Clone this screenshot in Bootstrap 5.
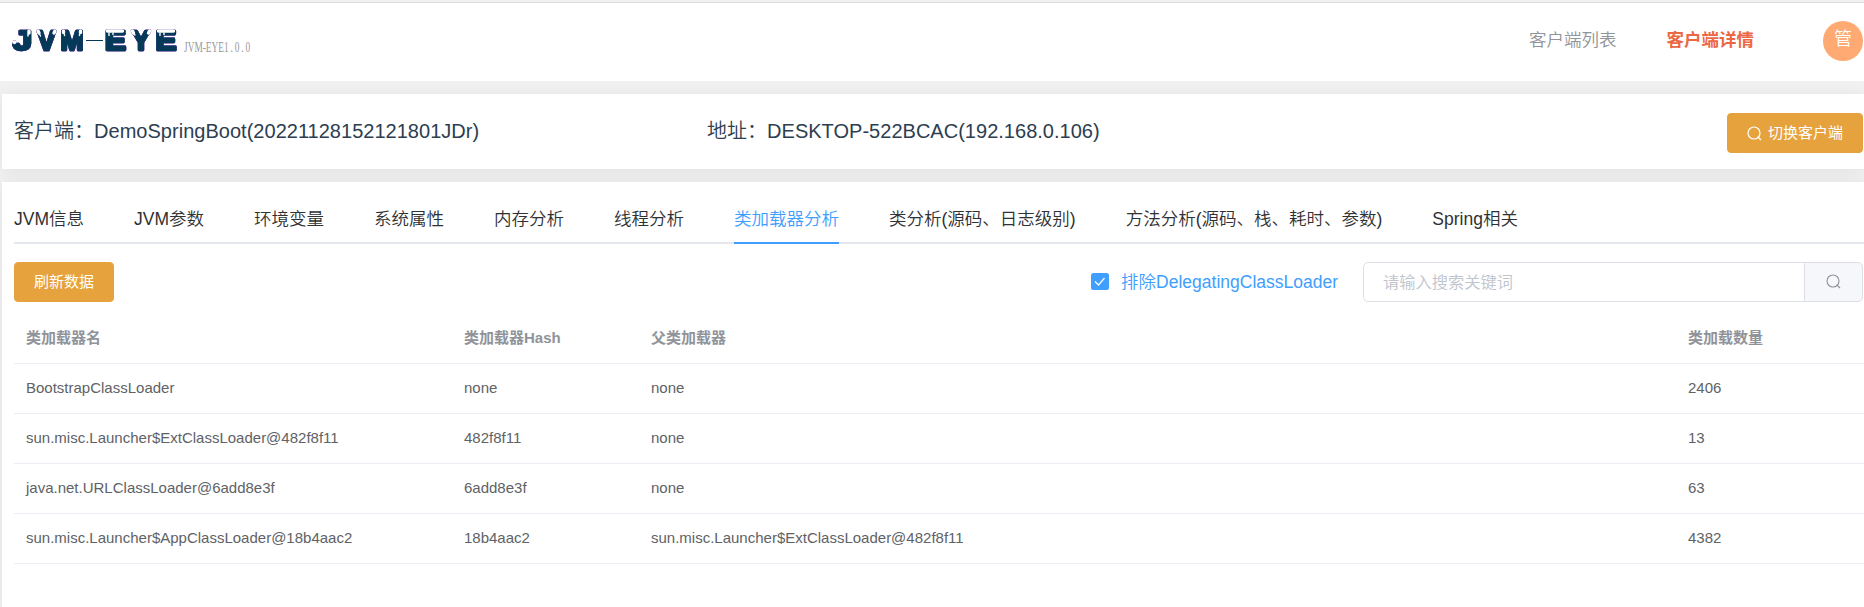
<!DOCTYPE html>
<html lang="zh-CN">
<head>
<meta charset="utf-8">
<title>JVM-EYE</title>
<link href="https://cdn.jsdelivr.net/npm/bootstrap@5.3.0/dist/css/bootstrap.min.css" rel="stylesheet">
<style>
body{font-family:"Liberation Sans","Noto Sans CJK SC",sans-serif;font-weight:350;background:#f1f1f1;color:#2c3e50;height:607px;overflow:hidden;font-size:17.5px}
.topbar{border-top:1px solid #dcdcdc;margin-top:2px;height:79px;background:#fff}
.topbar svg{overflow:visible}
.wordmark{filter:drop-shadow(0 0 .7px #8d4fc4) drop-shadow(0 0 .3px #8d4fc4)}
.nav-item-top{line-height:26px;padding-top:24px;color:#909399;margin-right:50px;white-space:nowrap;transform:translateX(-1px)}
.nav-item-top.active{color:#eb6844;font-weight:700}
.avatar{width:40px;height:40px;background:#ffa973;color:#fff;line-height:37px;font-size:18px;margin:18px 1px 0 18px}
.panel{margin-left:2px;background:#fff;box-shadow:0 2px 15px rgba(0,0,0,.07)}
.client-info{height:75px;margin-top:13px;font-size:20px}
.client-info>div{line-height:30px;padding-top:22px;white-space:nowrap;letter-spacing:.02px}
.col-client{width:693px}
.btn-gold{--bs-btn-font-weight:400;--bs-btn-color:#fff;--bs-btn-bg:#e6a23c;--bs-btn-border-color:#e6a23c;--bs-btn-hover-bg:#ebb563;--bs-btn-hover-color:#fff;--bs-btn-border-radius:4px;--bs-btn-font-size:15px;--bs-btn-padding-y:0;--bs-btn-padding-x:19px;height:40px;white-space:nowrap}
.btn-switch{margin:19px 1px 0 0;gap:6px}
.main-panel{margin-top:13px;height:425px;padding:12px 0 0 12px}
.tabs-line{gap:50px;height:50px;border-bottom:2px solid #e4e7ed;color:#303133;white-space:nowrap}
.tabs-line span{line-height:50px;height:50px}
.tabs-line .active{color:#409eff;border-bottom:2px solid #409eff}
.toolbar{margin-top:18px;height:40px;padding-right:1px}
.exclude{color:#409eff}
.tick{width:18px;height:17px;background:#409eff;border-radius:2.5px;margin-right:12px;margin-top:-1px}
.search{width:500px;height:40px;margin-left:25px}
.search .form-control{border-color:#dcdfe6;border-radius:5px 0 0 5px;font-size:16.25px;font-weight:350;padding:0 19px;color:#606266}
.search .form-control::placeholder{color:#c0c4cc}
.search .input-group-text{width:59px;background:#f5f7fa;border-color:#dcdfe6;border-radius:0 5px 5px 0;color:#909399;padding-bottom:8px}
.loader-table{--bs-table-color:#606266;--bs-table-bg:#fff;table-layout:fixed;font-size:15px;border-color:#ebeef5;margin-top:11px}
.loader-table td,.loader-table th{height:50px;padding:0 12px 1px;vertical-align:middle;color:#606266;line-height:23px}
.loader-table th{color:#909399;font-weight:700;padding-bottom:0}
</style>
</head>
<body>
<header class="topbar d-flex">
<svg width="255" height="70" class="me-auto" role="img" aria-label="JVM-EYE">
<g class="wordmark">
<g font-family="Liberation Sans" font-weight="700" font-size="28" fill="#043957" stroke="#043957" stroke-width="2.600" stroke-linejoin="round">
<text x="13" y="47" textLength="19" lengthAdjust="spacingAndGlyphs">J</text><text x="37.500" y="47" textLength="18" lengthAdjust="spacingAndGlyphs">V</text><text x="60.500" y="47" textLength="23" lengthAdjust="spacingAndGlyphs">M</text><text x="105" y="47" textLength="21" lengthAdjust="spacingAndGlyphs">E</text><text x="132" y="47" textLength="18" lengthAdjust="spacingAndGlyphs">Y</text><text x="155.500" y="47" textLength="21" lengthAdjust="spacingAndGlyphs">E</text></g>
<g fill="none" stroke="#fff" stroke-width="3.400" stroke-linecap="round">
<path d="M14.500 39v.5M29 28v2M38 28l1 2M55 28l-1 2M63.500 28v1.500M80.500 28v1.500M107.500 28h15M132.500 28l1 2M149.500 28l-1 2M158.500 28h15"/>
<path stroke-width="1.400" d="M28 31v2M39.500 31l1 2M64.500 31v1.500M79.500 31v1.500M109 30v2.500M113 30v1.500M160 30v2.500M164 30v1.500M134 31l1 1"/>
</g>
</g>
<path d="M86 37.500H103" stroke="#043957"/>
<text transform="translate(184 49) scale(.67 1)" font-family="Liberation Serif" font-size="14" fill="#999">JVM-EYE<tspan letter-spacing="2.700">1.0.0</tspan></text>
</svg>
<span class="nav-item-top">客户端列表</span><span class="nav-item-top active">客户端详情</span>
<span class="avatar rounded-circle text-center">管</span>
</header>
<section class="panel client-info d-flex ps-2">
<div class="col-client ms-1">客户端：DemoSpringBoot(20221128152121801JDr)</div>
<div>地址：DESKTOP-522BCAC(192.168.0.106)</div>
<button class="btn btn-gold btn-switch ms-auto d-flex align-items-center"><svg width="15" height="15" viewBox="0 0 15 15" fill="none" stroke="currentColor" stroke-width="1.2"><circle cx="7" cy="7" r="6"/><path d="M11 11l3 3"/></svg>切换客户端</button>
</section>
<main class="panel main-panel">
<nav class="tabs-line d-flex"><span>JVM信息</span><span>JVM参数</span><span>环境变量</span><span>系统属性</span><span>内存分析</span><span>线程分析</span><span class="active">类加载器分析</span><span>类分析(源码、日志级别)</span><span>方法分析(源码、栈、耗时、参数)</span><span>Spring相关</span></nav>
<div class="toolbar d-flex align-items-center">
<button class="btn btn-gold me-auto">刷新数据</button>
<label class="exclude d-flex align-items-center text-nowrap"><span class="tick d-flex"><svg width="18" height="17" fill="none" stroke="#fff" stroke-width="1.2"><path d="M4 8.500l3.500 3.500 6-7"/></svg></span>排除DelegatingClassLoader</label>
<div class="input-group search flex-nowrap"><input class="form-control" placeholder="请输入搜索关键词"><span class="input-group-text justify-content-center"><svg width="15" height="15" viewBox="0 0 15 15" fill="none" stroke="currentColor" stroke-width="1.1"><circle cx="7" cy="7" r="6"/><path d="M11 11l3 3"/></svg></span></div>
</div>
<table class="table loader-table mb-0">
<colgroup><col style="width:438px"><col style="width:187px"><col style="width:1037px"><col></colgroup>
<thead><tr><th>类加载器名</th><th>类加载器Hash</th><th>父类加载器</th><th>类加载数量</th></tr></thead>
<tbody>
<tr><td>BootstrapClassLoader</td><td>none</td><td>none</td><td>2406</td></tr>
<tr><td>sun.misc.Launcher$ExtClassLoader@482f8f11</td><td>482f8f11</td><td>none</td><td>13</td></tr>
<tr><td>java.net.URLClassLoader@6add8e3f</td><td>6add8e3f</td><td>none</td><td>63</td></tr>
<tr><td>sun.misc.Launcher$AppClassLoader@18b4aac2</td><td>18b4aac2</td><td>sun.misc.Launcher$ExtClassLoader@482f8f11</td><td>4382</td></tr>
</tbody></table>
</main>
<script src="https://cdn.jsdelivr.net/npm/bootstrap@5.3.0/dist/js/bootstrap.bundle.min.js"></script>
</body>
</html>
